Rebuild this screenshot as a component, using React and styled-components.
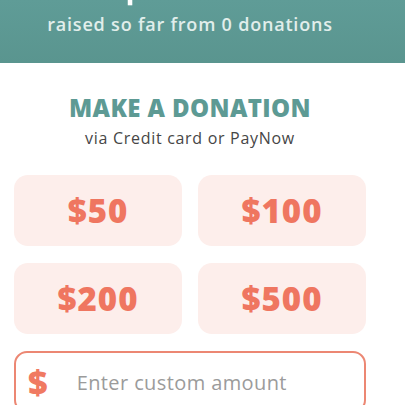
import styled, { createGlobalStyle } from "styled-components";

const GlobalStyle = createGlobalStyle`
  body {
    margin: 0;
    background: #fff;
    font-family: "Open Sans", "Noto Sans", sans-serif;
    overflow: hidden;
  }
`;

const amounts = [50, 100, 200, 500];

const App = () => {
  return (
    <>
      <GlobalStyle />
      <Banner>
        <BannerInner>
          <Total>$0.00</Total>
          <Raised>raised so far from 0 donations</Raised>
        </BannerInner>
      </Banner>
      <Donate>
        <Title>MAKE A DONATION</Title>
        <Via>via Credit card or PayNow</Via>
        <Amounts>
          {amounts.map((a) => (
            <AmountButton key={a}>${a}</AmountButton>
          ))}
        </Amounts>
        <CustomField>
          <Dollar>$</Dollar>
          <input type="text" placeholder="Enter custom amount" />
        </CustomField>
      </Donate>
    </>
  );
};

const Banner = styled.div`
  width: 100%;
  height: 63px;
  overflow: hidden;
  background: linear-gradient(180deg, #5f9c97 0%, #5a958f 100%);
`;

const BannerInner = styled.div`
  width: 380px;
  display: flex;
  flex-direction: column;
  align-items: center;
  margin-top: -52px;
`;

const Total = styled.div`
  color: #fff;
  font-family: "DejaVu Sans", sans-serif;
  font-size: 56px;
  font-weight: 700;
  line-height: 60px;
  margin-left: 18px;
`;

const Raised = styled.div`
  color: #e1eeeb;
  font-size: 18px;
  font-weight: 600;
  line-height: 22px;
  letter-spacing: 0.8px;
  margin-top: 5px;
`;

const Donate = styled.div`
  width: 380px;
  box-sizing: border-box;
  padding: 30px 14px 0;
  display: flex;
  flex-direction: column;
  align-items: center;
`;

const Title = styled.h2`
  margin: 0;
  color: #5d9a94;
  font-size: 24px;
  font-weight: 800;
  line-height: 30px;
  letter-spacing: 0.4px;
`;

const Via = styled.div`
  color: #464646;
  font-size: 16px;
  font-weight: 500;
  line-height: 20px;
  letter-spacing: 0.7px;
  margin-top: 5px;
`;

const Amounts = styled.div`
  width: 100%;
  display: grid;
  grid-template-columns: 1fr 1fr;
  gap: 17px 16px;
  margin-top: 27px;
`;

const AmountButton = styled.button`
  height: 71px;
  border: none;
  border-radius: 14px;
  background: #fdeeeb;
  color: #ef7660;
  font-family: "Open Sans", "Noto Sans", sans-serif;
  font-size: 33px;
  font-weight: 800;
  letter-spacing: 1px;
  cursor: pointer;
`;

const CustomField = styled.div`
  width: 100%;
  box-sizing: border-box;
  margin-top: 17px;
  height: 62px;
  display: flex;
  align-items: center;
  border: 2px solid #ec8773;
  border-radius: 13px;
  padding: 0 12px;
  input {
    flex: 1;
    min-width: 0;
    border: none;
    outline: none;
    background: transparent;
    font-family: "Open Sans", "Noto Sans", sans-serif;
    font-size: 20px;
    letter-spacing: 0.4px;
    color: #444;
    margin-left: 27px;
  }
  input::placeholder {
    color: #9b9b9b;
  }
`;

const Dollar = styled.span`
  color: #f07a62;
  font-size: 34px;
  font-weight: 800;
  line-height: 1;
`;

export default App;
